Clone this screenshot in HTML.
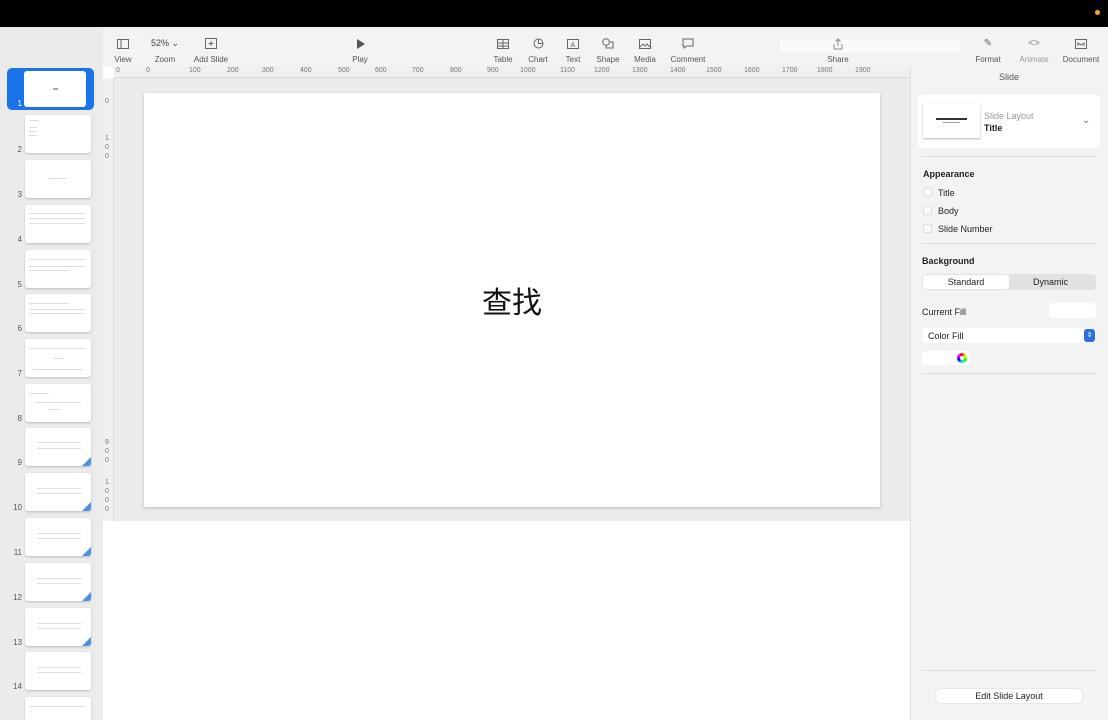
<!DOCTYPE html>
<html style="overflow:hidden;width:1108px;height:720px"><head><meta charset="utf-8"><style>
*{margin:0;padding:0;box-sizing:border-box}
body{width:1108px;height:720px;overflow:hidden;background:#fff;font-family:"Liberation Sans","Noto Sans CJK SC",sans-serif;position:relative;color:#333}
.abs{position:absolute}
.top{left:0;top:0;width:1108px;height:27px;background:#000}
.side{left:0;top:27px;width:103px;height:693px;background:#ebebeb}
.tb{left:103px;top:27px;width:1005px;height:40px;background:#f3f3f3}
.tbi{position:absolute;top:36px;font-size:8px;color:#555;text-align:center;width:50px;margin-left:-25px}
.tbi .ic{height:15px;font-size:10px;color:#666;display:flex;align-items:center;justify-content:center}
.tbi .lb{margin-top:4px}
.ruler{left:114px;top:66px;width:796px;height:12px;background:#f0f0f0;border-bottom:1px solid #ddd;font-size:7px;color:#777}
.ruler span{position:absolute;top:1px}
.vr{left:103px;top:78px;width:11px;height:443px;background:#f0f0f0;border-right:1px solid #ddd;font-size:7px;color:#777}
.canvas{left:114px;top:78px;width:796px;height:443px;background:#ebebeb}
.slide{left:144px;top:93px;width:736px;height:414px;background:#fff;box-shadow:0 1px 3px rgba(0,0,0,.2)}
.rp{left:910px;top:67px;width:198px;height:653px;background:#f3f3f3;border-left:1px solid #ddd}
.th{position:absolute;left:25px;width:66px;height:38px;background:#fff;border-radius:3px;box-shadow:0 1px 2px rgba(0,0,0,.2);overflow:hidden}
.num{position:absolute;width:22px;text-align:right;font-size:8px;color:#555}
.line{position:absolute;height:1px;background:#ddd}
.tri{position:absolute;right:0;bottom:0;width:0;height:0;border-left:9px solid transparent;border-bottom:9px solid #4a90e2}
.cb{position:absolute;left:923px;width:9px;height:9px;border:1px solid #ddd;background:#fafafa;border-radius:2px}
.t9{font-size:9px;color:#222;position:absolute}
.sep{position:absolute;left:922px;width:174px;height:1px;background:#ddd}
</style></head><body>
<div class="abs top"></div>
<div class="abs" style="left:1095px;top:10px;width:5px;height:5px;border-radius:50%;background:#f5a623"></div>
<div class="abs side"></div>
<div class="abs tb"></div>

<div class="tbi" style="left:123px"><div class="ic"><svg width="12" height="10"><rect x=".5" y=".5" width="11" height="9" fill="none" stroke="#666"/><line x1="4" y1="1" x2="4" y2="9" stroke="#666"/></svg></div><div class="lb">View</div></div>
<div class="tbi" style="left:165px"><div class="ic" style="font-size:9px;color:#444">52% ⌄</div><div class="lb">Zoom</div></div>
<div class="tbi" style="left:211px"><div class="ic"><svg width="12" height="11"><rect x=".5" y=".5" width="11" height="10" fill="none" stroke="#666"/><path d="M6 3v5M3.5 5.5h5" stroke="#666"/></svg></div><div class="lb">Add Slide</div></div>
<div class="tbi" style="left:360px"><div class="ic"><svg width="9" height="10"><path d="M1 0L9 5L1 10Z" fill="#555"/></svg></div><div class="lb">Play</div></div>
<div class="tbi" style="left:503px"><div class="ic"><svg width="12" height="10"><rect x=".5" y=".5" width="11" height="9" fill="none" stroke="#666"/><path d="M1 4h10M1 7h10M6 1v8" stroke="#666"/></svg></div><div class="lb">Table</div></div>
<div class="tbi" style="left:538px"><div class="ic"><svg width="11" height="11"><circle cx="5.5" cy="5.5" r="4.5" fill="none" stroke="#666"/><path d="M5.5 1v4.5h4" fill="none" stroke="#666"/></svg></div><div class="lb">Chart</div></div>
<div class="tbi" style="left:573px"><div class="ic"><svg width="12" height="10"><rect x=".5" y=".5" width="11" height="9" fill="none" stroke="#666"/><text x="3.5" y="8" font-size="7" fill="#666" font-family="Liberation Sans">A</text></svg></div><div class="lb">Text</div></div>
<div class="tbi" style="left:608px"><div class="ic"><svg width="12" height="11"><rect x="4" y="4" width="7" height="6" fill="none" stroke="#666"/><circle cx="4" cy="4" r="3.3" fill="#f3f3f3" stroke="#666"/></svg></div><div class="lb">Shape</div></div>
<div class="tbi" style="left:645px"><div class="ic"><svg width="12" height="10"><rect x=".5" y=".5" width="11" height="9" fill="none" stroke="#666"/><path d="M1 8l3-3 2 2 2-2 3 3" fill="none" stroke="#666"/></svg></div><div class="lb">Media</div></div>
<div class="tbi" style="left:688px"><div class="ic"><svg width="12" height="11"><path d="M1 1h10v7H5l-3 2V8H1z" fill="none" stroke="#666"/></svg></div><div class="lb">Comment</div></div>
<div class="abs" style="left:780px;top:40px;width:180px;height:12px;background:rgba(255,255,255,.6)"></div>
<div class="tbi" style="left:838px"><div class="ic"><svg width="10" height="12"><path d="M5 8V1M2.5 3.5L5 1l2.5 2.5M1 6v5h8V6" fill="none" stroke="#888"/></svg></div><div class="lb">Share</div></div>
<div class="tbi" style="left:988px"><div class="ic">✎</div><div class="lb">Format</div></div>
<div class="tbi" style="left:1034px"><div class="ic" style="color:#888">&lt;&gt;</div><div class="lb" style="color:#999">Animate</div></div>
<div class="tbi" style="left:1081px"><div class="ic"><svg width="12" height="10"><rect x=".5" y=".5" width="11" height="9" fill="none" stroke="#666"/><path d="M3 7V4l3 2 3-2v3" fill="none" stroke="#666"/></svg></div><div class="lb">Document</div></div>

<div class="abs ruler">
<span style="left:32px">0</span><span style="left:75px">100</span><span style="left:113px">200</span><span style="left:148px">300</span><span style="left:186px">400</span><span style="left:224px">500</span><span style="left:261px">600</span><span style="left:298px">700</span><span style="left:336px">800</span><span style="left:373px">900</span><span style="left:406px">1000</span><span style="left:446px">1100</span><span style="left:480px">1200</span><span style="left:518px">1300</span><span style="left:556px">1400</span><span style="left:592px">1500</span><span style="left:630px">1600</span><span style="left:668px">1700</span><span style="left:703px">1800</span><span style="left:741px">1900</span>
</div>
<div class="abs" style="left:116px;top:67px;font-size:7px;color:#777">0</div>
<div class="abs canvas"></div>
<div class="abs vr">
<div style="position:absolute;left:2px;top:20px">0</div>
<div style="position:absolute;left:2px;top:56px;line-height:9px">1<br>0<br>0</div>
<div style="position:absolute;left:2px;top:360px;line-height:9px">9<br>0<br>0</div>
<div style="position:absolute;left:2px;top:400px;line-height:9px">1<br>0<br>0<br>0</div>
</div>
<div class="abs slide"><div style="position:absolute;left:0;right:0;top:185px;text-align:center;font-size:30px;color:#111;font-family:'Liberation Sans','Noto Sans CJK SC',sans-serif">查找</div></div>

<div class="abs" style="left:7px;top:68px;width:87px;height:42px;background:#1a73e8;border-radius:5px"></div>
<div class="abs" style="left:24px;top:71px;width:62px;height:36px;background:#fff;border-radius:3px"><div style="position:absolute;left:29px;top:17px;width:5px;height:2px;background:#aaa"></div></div>
<div class="num" style="left:0;top:99px;color:#fff">1</div>

<div class="th" style="top:115px"><div class="line" style="left:4px;top:5px;width:10px"></div><div class="line" style="left:4px;top:12px;width:8px"></div><div class="line" style="left:4px;top:16px;width:8px"></div><div class="line" style="left:4px;top:20px;width:8px"></div></div><div class="num" style="top:145px">2</div>
<div class="th" style="top:160px"><div class="line" style="left:24px;top:18px;width:18px"></div></div><div class="num" style="top:190px">3</div>
<div class="th" style="top:205px"><div class="line" style="left:4px;top:8px;width:56px"></div><div class="line" style="left:4px;top:13px;width:56px"></div><div class="line" style="left:4px;top:18px;width:56px"></div></div><div class="num" style="top:235px">4</div>
<div class="th" style="top:250px"><div class="line" style="left:4px;top:9px;width:56px"></div><div class="line" style="left:4px;top:16px;width:56px"></div><div class="line" style="left:4px;top:20px;width:40px"></div></div><div class="num" style="top:280px">5</div>
<div class="th" style="top:294px"><div class="line" style="left:4px;top:9px;width:40px"></div><div class="line" style="left:4px;top:15px;width:56px"></div><div class="line" style="left:4px;top:19px;width:56px"></div></div><div class="num" style="top:324px">6</div>
<div class="th" style="top:339px"><div class="line" style="left:4px;top:9px;width:56px"></div><div class="line" style="left:28px;top:19px;width:10px"></div><div class="line" style="left:8px;top:30px;width:50px"></div></div><div class="num" style="top:369px">7</div>
<div class="th" style="top:384px"><div class="line" style="left:4px;top:9px;width:20px"></div><div class="line" style="left:10px;top:18px;width:46px"></div><div class="line" style="left:24px;top:25px;width:12px"></div></div><div class="num" style="top:414px">8</div>
<div class="th" style="top:428px"><div class="line" style="left:12px;top:14px;width:44px"></div><div class="line" style="left:12px;top:20px;width:44px"></div><div class="tri"></div></div><div class="num" style="top:458px">9</div>
<div class="th" style="top:473px"><div class="line" style="left:12px;top:15px;width:44px"></div><div class="line" style="left:12px;top:20px;width:44px"></div><div class="tri"></div></div><div class="num" style="top:503px">10</div>
<div class="th" style="top:518px"><div class="line" style="left:12px;top:15px;width:44px"></div><div class="line" style="left:12px;top:20px;width:44px"></div><div class="tri"></div></div><div class="num" style="top:548px">11</div>
<div class="th" style="top:563px"><div class="line" style="left:12px;top:15px;width:44px"></div><div class="line" style="left:12px;top:20px;width:44px"></div><div class="tri"></div></div><div class="num" style="top:593px">12</div>
<div class="th" style="top:608px"><div class="line" style="left:12px;top:15px;width:44px"></div><div class="line" style="left:12px;top:20px;width:44px"></div><div class="tri"></div></div><div class="num" style="top:638px">13</div>
<div class="th" style="top:652px"><div class="line" style="left:12px;top:15px;width:44px"></div><div class="line" style="left:12px;top:20px;width:44px"></div></div><div class="num" style="top:682px">14</div>
<div class="th" style="top:697px;height:23px;border-radius:3px 3px 0 0"><div class="line" style="left:4px;top:9px;width:56px"></div></div>

<div class="abs rp"></div>
<div class="abs" style="left:910px;top:72px;width:198px;text-align:center;font-size:9px;color:#555">Slide</div>
<div class="abs" style="left:918px;top:95px;width:182px;height:53px;background:#fff;border-radius:4px"></div>
<div class="abs" style="left:923px;top:104px;width:57px;height:34px;background:#fff;box-shadow:0 1px 2px rgba(0,0,0,.3)"><div style="position:absolute;left:13px;top:14px;width:31px;height:2px;background:#333"></div><div style="position:absolute;left:20px;top:18px;width:17px;height:1px;background:#999"></div></div>
<div class="t9" style="left:984px;top:111px;color:#999">Slide Layout</div>
<div class="t9" style="left:984px;top:123px;font-weight:bold">Title</div>
<div class="abs" style="left:1082px;top:115px;font-size:10px;color:#777">⌄</div>
<div class="sep" style="top:156px"></div>
<div class="t9" style="left:923px;top:169px;font-weight:bold">Appearance</div>
<div class="cb" style="top:188px"></div><div class="t9" style="left:938px;top:188px">Title</div>
<div class="cb" style="top:206px"></div><div class="t9" style="left:938px;top:206px">Body</div>
<div class="cb" style="top:224px"></div><div class="t9" style="left:938px;top:224px">Slide Number</div>
<div class="sep" style="top:243px"></div>
<div class="t9" style="left:922px;top:256px;font-weight:bold">Background</div>
<div class="abs" style="left:922px;top:274px;width:174px;height:16px;background:#e2e2e2;border-radius:4px"></div>
<div class="abs" style="left:923px;top:275px;width:86px;height:14px;background:#fff;border-radius:3px;font-size:9px;text-align:center;line-height:14px;color:#222">Standard</div>
<div class="t9" style="left:1033px;top:277px">Dynamic</div>
<div class="t9" style="left:922px;top:307px">Current Fill</div>
<div class="abs" style="left:1049px;top:303px;width:47px;height:15px;background:#fff;border-radius:4px"></div>
<div class="abs" style="left:922px;top:328px;width:174px;height:15px;background:#fff;border-radius:4px"></div>
<div class="t9" style="left:928px;top:331px">Color Fill</div>
<div class="abs" style="left:1084px;top:329px;width:11px;height:13px;background:#2d6fe0;border-radius:3px;color:#fff;font-size:7px;text-align:center;line-height:13px">⇕</div>
<div class="abs" style="left:922px;top:351px;width:48px;height:14px;background:#fff;border-radius:4px"></div>
<div class="abs" style="left:957px;top:353px;width:10px;height:10px;border-radius:50%;background:conic-gradient(red,yellow,lime,cyan,blue,magenta,red)"><div style="position:absolute;left:3px;top:3px;width:4px;height:4px;border-radius:50%;background:#fff"></div></div>
<div class="sep" style="top:373px"></div>
<div class="sep" style="top:670px"></div>
<div class="abs" style="left:936px;top:689px;width:146px;height:14px;background:#fff;border-radius:4px;box-shadow:0 0 1px rgba(0,0,0,.3);font-size:9px;text-align:center;line-height:14px;color:#222">Edit Slide Layout</div>
</body></html>
